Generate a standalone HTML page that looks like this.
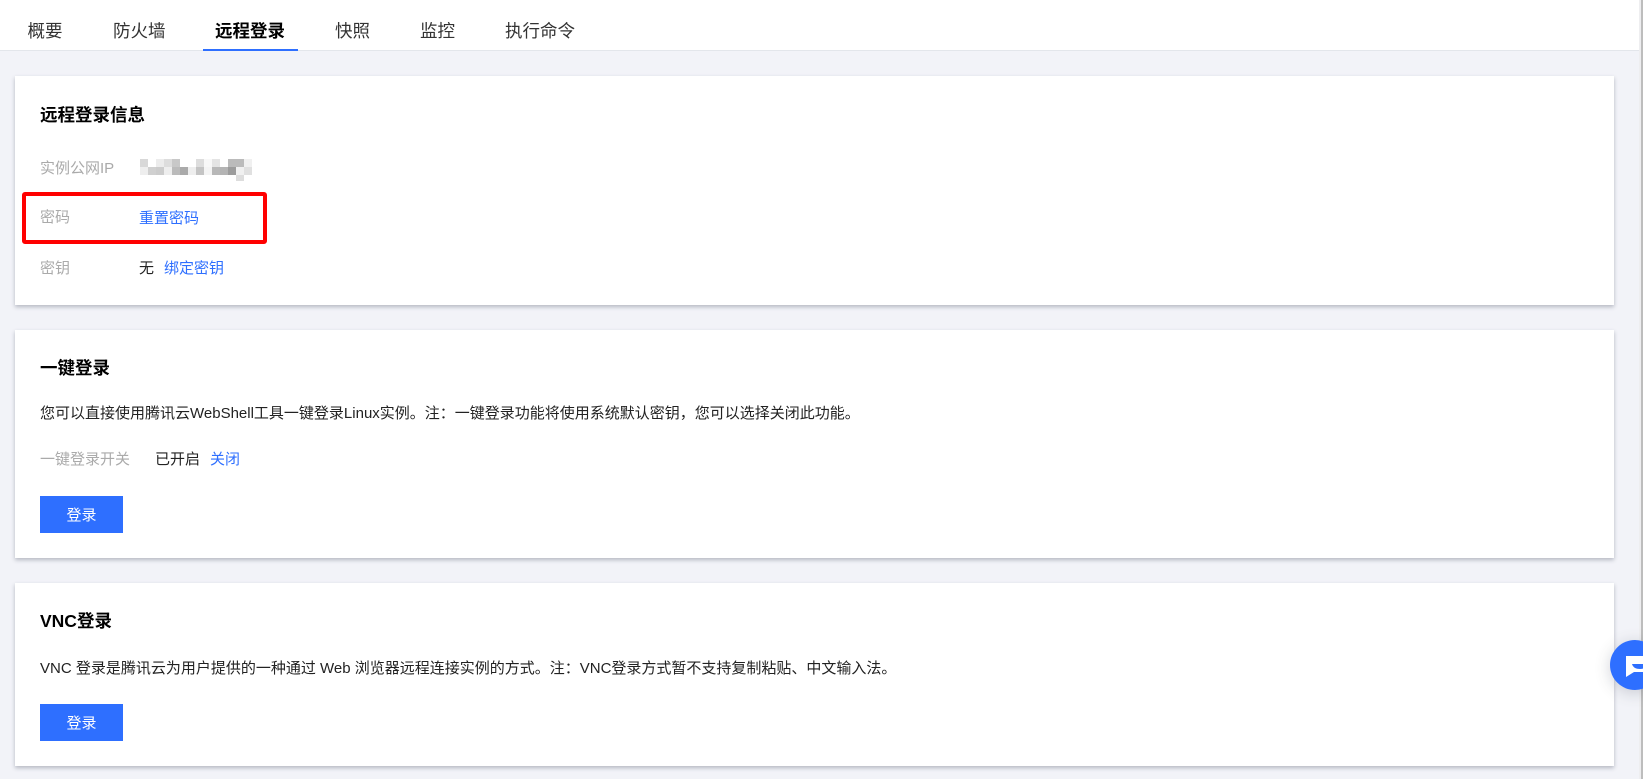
<!DOCTYPE html>
<html lang="zh">
<head>
<meta charset="utf-8">
<title>远程登录</title>
<style>
html,body{margin:0;padding:0;width:1643px;height:779px;overflow:hidden;background:#f2f3f8;}
body{position:relative;font-family:"Liberation Sans","Noto Sans CJK SC",sans-serif;font-size:15px;color:#000;}
.t{position:absolute;white-space:nowrap;line-height:24px;height:24px;}
.tabbar{position:absolute;left:0;top:0;width:1639px;height:50px;background:#fff;border-bottom:1px solid #e3e6eb;}
.tab{font-size:17.5px;color:#333;top:19px;}
.active{font-weight:bold;color:#000;}
.underline{position:absolute;left:203px;top:49px;width:95px;height:2px;background:#2e6fff;}
.card{position:absolute;left:15px;width:1599px;background:#fff;box-shadow:0 2px 4px rgba(54,58,80,.32);}
.h{font-size:17.5px;font-weight:bold;color:#000;}
.lbl{color:#aaa;}
.lnk{color:#2e6fff;}
.txt{color:#222;}
.btn{position:absolute;left:40px;width:83px;height:37px;line-height:39px;background:#2e6fff;color:#fff;text-align:center;font-size:15px;}
.red{position:absolute;left:22px;top:192px;width:237px;height:44px;border:4px solid #f00;border-radius:3px;}
.sb1{position:absolute;left:1639px;top:0;width:2px;height:779px;background:#eeeef0;}
.sb2{position:absolute;left:1641px;top:0;width:2px;height:779px;background:#bdbdbd;}
svg{position:absolute;}
</style>
</head>
<body>
<div class="tabbar"></div>
<div class="t tab" style="left:27.500px">概要</div>
<div class="t tab" style="left:113px">防火墙</div>
<div class="t tab active" style="left:215px">远程登录</div>
<div class="t tab" style="left:335px">快照</div>
<div class="t tab" style="left:420px">监控</div>
<div class="t tab" style="left:505px">执行命令</div>
<div class="underline"></div>

<div class="card" style="top:76px;height:229px"></div>
<div class="card" style="top:330px;height:228px"></div>
<div class="card" style="top:583px;height:183px"></div>

<div class="t h" style="left:40px;top:103px">远程登录信息</div>
<div class="t lbl" style="left:40px;top:157px">实例公网IP</div>
<svg style="left:140px;top:159px" width="112" height="22" shape-rendering="crispEdges">
<g>
<rect x="0" y="0" width="8" height="8" fill="#d8d8d8"/><rect x="16" y="0" width="8" height="8" fill="#ececec"/><rect x="24" y="0" width="8" height="8" fill="#dddddd"/><rect x="32" y="0" width="8" height="8" fill="#c8c8c8"/><rect x="56" y="0" width="8" height="8" fill="#dddddd"/><rect x="64" y="0" width="8" height="8" fill="#f8f8f8"/><rect x="72" y="0" width="8" height="8" fill="#e4e4e4"/><rect x="88" y="0" width="8" height="8" fill="#bbbbbb"/><rect x="96" y="0" width="8" height="8" fill="#bbbbbb"/><rect x="104" y="0" width="8" height="8" fill="#f0f0f0"/>
<rect x="0" y="8" width="8" height="8" fill="#eeeeee"/><rect x="8" y="8" width="8" height="8" fill="#d0d0d0"/><rect x="16" y="8" width="8" height="8" fill="#cccccc"/><rect x="24" y="8" width="8" height="8" fill="#eeeeee"/><rect x="32" y="8" width="8" height="8" fill="#bbbbbb"/><rect x="40" y="8" width="8" height="8" fill="#aaaaaa"/><rect x="48" y="8" width="8" height="8" fill="#eeeeee"/><rect x="56" y="8" width="8" height="8" fill="#c4c4c4"/><rect x="64" y="8" width="8" height="8" fill="#f4f4f4"/><rect x="72" y="8" width="8" height="8" fill="#b8b8b8"/><rect x="80" y="8" width="8" height="8" fill="#b4b4b4"/><rect x="88" y="8" width="8" height="8" fill="#9c9c9c"/><rect x="96" y="8" width="8" height="8" fill="#f0f0f0"/><rect x="104" y="8" width="8" height="8" fill="#e0e0e0"/>
<rect x="96" y="16" width="8" height="6" fill="#dddddd"/>
</g>
</svg>
<div class="t lbl" style="left:40px;top:206px">密码</div>
<div class="t lnk" style="left:139px;top:207px">重置密码</div>
<div class="red"></div>
<div class="t lbl" style="left:40px;top:257px">密钥</div>
<div class="t txt" style="left:139px;top:257px">无</div>
<div class="t lnk" style="left:164px;top:257px">绑定密钥</div>

<div class="t h" style="left:40px;top:356px">一键登录</div>
<div class="t txt" style="left:40px;top:402px">您可以直接使用腾讯云WebShell工具一键登录Linux实例。注：一键登录功能将使用系统默认密钥，您可以选择关闭此功能。</div>
<div class="t lbl" style="left:40px;top:448px">一键登录开关</div>
<div class="t txt" style="left:155px;top:448px">已开启</div>
<div class="t lnk" style="left:210px;top:448px">关闭</div>
<div class="btn" style="top:496px">登录</div>

<div class="t h" style="left:40px;top:609px">VNC登录</div>
<div class="t txt" style="left:40px;top:657px">VNC 登录是腾讯云为用户提供的一种通过 Web 浏览器远程连接实例的方式。注：VNC登录方式暂不支持复制粘贴、中文输入法。</div>
<div class="btn" style="top:704px">登录</div>

<div class="sb1"></div>
<div class="sb2"></div>

<svg style="left:1590px;top:620px" width="53" height="90" viewBox="1590 620 53 90">
<defs><filter id="s" x="-50%" y="-50%" width="200%" height="200%"><feGaussianBlur stdDeviation="8"/></filter></defs>
<circle cx="1635" cy="668" r="25" fill="#363a50" opacity=".22" filter="url(#s)"/>
<circle cx="1635" cy="665" r="25" fill="#2e6fff"/>
<path d="M1626 656H1650V672H1634L1626 677Z" fill="#fff"/>
<path d="M1632 664H1648C1647 667.500 1644 669 1640 669C1636 669 1633 667.500 1632 664Z" fill="#2e6fff"/>
</svg>
</body>
</html>
